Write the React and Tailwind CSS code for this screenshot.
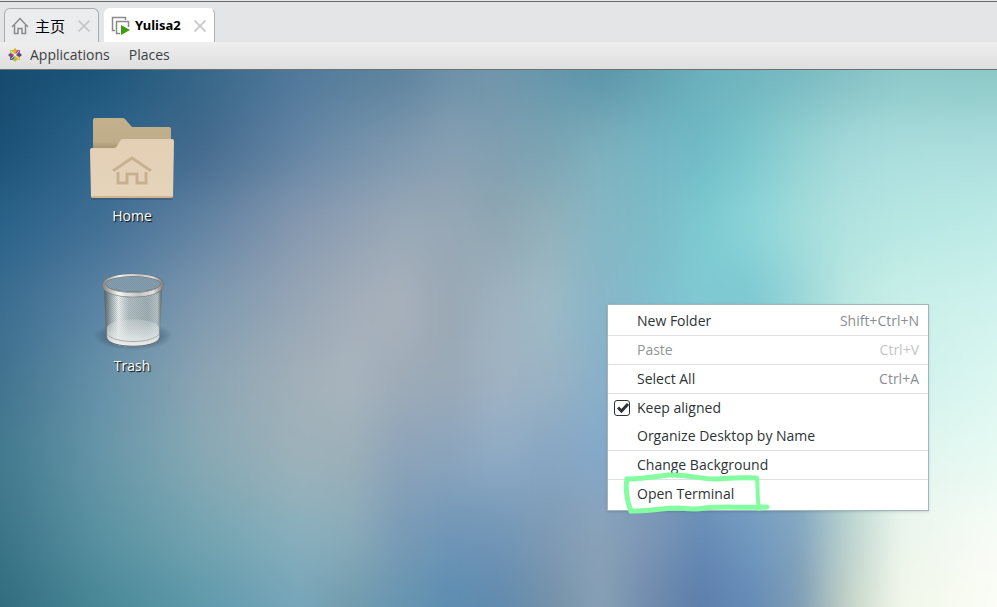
import { useState } from 'react';

const UI_FONT = "font-['Open_Sans','Noto_Sans',sans-serif]";

// Wallpaper: one horizontal gradient per band, softened vertically
const STOPS = [0, 100, 200, 300, 350, 400, 450, 500, 550, 600, 650, 700, 750, 800, 850, 900, 997];
const BANDS = [
  ['#164b6e', '#1b5479', '#356688', '#50789a', '#567e9b', '#5d829d', '#6b90a8', '#7095ab', '#6496ab', '#5a94a8', '#62a0b0', '#6aafbb', '#70b4be', '#77b9c1', '#83bfc4', '#8cc7c8', '#8bc7c6'],
  ['#1b5075', '#2f658c', '#42698c', '#6485a5', '#7290aa', '#7d98af', '#879fb2', '#7f9fb1', '#7aa4b3', '#7eb0bd', '#76b6c4', '#6fbac5', '#7bc7cd', '#93d2d3', '#a5dadb', '#aadedd', '#acdede'],
  ['#2a6289', '#416f95', '#6283a3', '#8799b0', '#91a1b4', '#9aa9b7', '#97a8b6', '#8fa7b2', '#92b1bb', '#86b7c4', '#7cbbc7', '#7dcad1', '#8bd5d9', '#a3dddb', '#b1e3e0', '#b6e7e3', '#bdebe6'],
  ['#3a6d90', '#5b83a4', '#7d98af', '#97a6b6', '#a2adb9', '#a8b2bb', '#9aa8b5', '#9fb2bf', '#9dbbc6', '#88b5c8', '#80bfcd', '#7fc9d3', '#7cc8d1', '#98d6d9', '#bce8e2', '#c9efe8', '#cff2ee'],
  ['#41738f', '#6591a9', '#8ba4b3', '#a2b0b9', '#a9b5be', '#9facb8', '#9aa9b7', '#a1b3c3', '#9ab3c4', '#8ab0c9', '#86b1c9', '#80b8ca', '#8ac3cd', '#a3d6da', '#bfe7e5', '#cff0ee', '#dbf7f0'],
  ['#427a8f', '#6696a8', '#87a9b4', '#9eb2ba', '#9cafb9', '#8da4b9', '#8ca5bd', '#90acc6', '#87a6c2', '#84a9ca', '#839fc0', '#7da2c6', '#80a7c6', '#8db5c9', '#b7dad8', '#e0f5ee', '#e6faf3'],
  ['#3c7488', '#5a92a2', '#74a4b1', '#89b0bd', '#8bacba', '#7a9bb6', '#7096b7', '#7296b6', '#7f9bb5', '#8aa2b8', '#7c97b6', '#668bb5', '#719ac0', '#83a5c0', '#bdd4cf', '#ebf5ec', '#f8fcf6'],
  ['#2f6b7e', '#478795', '#5c98aa', '#76a5ba', '#709bad', '#6595b0', '#5a8cb0', '#6089ae', '#7390a8', '#86a0b5', '#6f8aab', '#5c7dab', '#6389b5', '#7f9db3', '#c8d5c8', '#f2f7ea', '#fbfdf6'],
];

function Wallpaper() {
  return (
    <svg
      className="absolute inset-0 h-full w-full"
      viewBox="0 0 997 537"
      preserveAspectRatio="none"
      aria-hidden="true"
    >
      <defs>
        {BANDS.map((colors, row) => (
          <linearGradient key={row} id={`band-${row}`} gradientUnits="userSpaceOnUse" x1="0" x2="997" y1="0" y2="0">
            {colors.map((color, i) => (
              <stop key={i} offset={STOPS[i] / 997} stopColor={color} />
            ))}
          </linearGradient>
        ))}
        <filter id="soften" x="-10%" y="-40%" width="120%" height="180%" colorInterpolationFilters="sRGB">
          <feGaussianBlur stdDeviation="8 29" />
        </filter>
      </defs>
      <g filter="url(#soften)">
        {BANDS.map((_, row) => (
          <rect
            key={row}
            x="-60"
            width="1117"
            y={row === 0 ? -150 : row * 77 - 38}
            height={row === 0 ? 189 : row === BANDS.length - 1 ? 240 : 78}
            fill={`url(#band-${row})`}
          />
        ))}
      </g>
    </svg>
  );
}

function HouseIcon() {
  return (
    <svg width="18" height="18" viewBox="0 0 18 18" fill="none" stroke="#8a8a8a" strokeWidth="1.5" aria-hidden="true">
      <path d="M1 10 9 1.500l8 8.500" />
      <path d="M3.500 8v8.500h3.500v-5h4v5h3.500V8" />
    </svg>
  );
}

function MachineIcon() {
  return (
    <svg width="20" height="20" viewBox="0 0 20 20" fill="none" aria-hidden="true">
      <path d="M4 14.500H1.500v-13h13V4" stroke="#8a8a8a" strokeWidth="1.500" />
      <path d="M9 17.500H5.500v-12h12V11" stroke="#8a8a8a" strokeWidth="1.500" />
      <path d="M10 9v10l9-5z" fill="#3f9c12" />
    </svg>
  );
}

function CloseIcon() {
  return (
    <svg width="12" height="12" viewBox="0 0 12 12" stroke="#c6c6c6" strokeWidth="1.600" aria-hidden="true">
      <path d="M0.500 0.500l11 11M11.500 0.500l-11 11" />
    </svg>
  );
}

function PinwheelIcon() {
  return (
    <svg width="14" height="14" viewBox="0 0 14 14" aria-hidden="true">
      <path d="M2 2h4.500v4.500H2z" fill="#b4d55c" />
      <path d="M7.500 2H12v4.500H7.500z" fill="#a8569a" />
      <path d="M2 7.500h4.500V12H2z" fill="#5b5a9c" />
      <path d="M7.500 7.500H12V12H7.500z" fill="#f0b54a" />
      <path d="M7 0l2 2.200L7 6 5 2.200z" fill="#efa724" />
      <path d="M14 7l-2.200 2L8 7l3.800-2z" fill="#4a4990" />
      <path d="M7 14l-2-2.200L7 8l2 3.800z" fill="#9ccd2a" />
      <path d="M0 7l2.200-2L6 7 2.200 9z" fill="#a0388a" />
      <path d="M3 3l8 8M11 3l-8 8" stroke="#f4f0ea" strokeWidth="0.700" />
    </svg>
  );
}

function FolderIcon() {
  return (
    <svg width="84" height="84" viewBox="0 0 84 84" aria-hidden="true">
      <defs>
        <linearGradient id="folder-back" x1="0" y1="0" x2="0" y2="1">
          <stop offset="0" stopColor="#c3b18e" />
          <stop offset="0.750" stopColor="#bfac88" />
          <stop offset="1" stopColor="#a08d6d" />
        </linearGradient>
        <linearGradient id="folder-front" x1="0" y1="0" x2="0" y2="1">
          <stop offset="0" stopColor="#e3cfb4" />
          <stop offset="1" stopColor="#e5d4bb" />
        </linearGradient>
      </defs>
      <path d="M3 32V2q0-2 2-2h27q2 0 3 1l6 7q1 1 2 1h36q2 0 2 2v21z" fill="url(#folder-back)" />
      <path d="M1 78v2q0 2 2 2h78q2 0 2-2v-2z" fill="#34536e" opacity="0.500" />
      <path d="M0 32q0-2 2-2h22q2 0 3-2l3-5q1-2 3-2h49q2 0 2 2l-1 55q0 2-2 2H3q-2 0-2-2z" fill="url(#folder-front)" />
      <path d="M1 78q0 2 2 2h78q2 0 2-2z" fill="#d3b28e" />
      <path d="M23 54l19-14 19 14M28 55v10h9v-9h10v9h9V55" fill="none" stroke="#f0e2cf" strokeWidth="2.500" />
      <path d="M23 53l19-13 19 13M28 54v11h9v-9h10v9h9V54" fill="none" stroke="#c6b090" strokeWidth="3" />
    </svg>
  );
}

function TrashIcon() {
  return (
    <svg width="84" height="84" viewBox="0 0 84 84" aria-hidden="true">
      <defs>
        <linearGradient id="bin-body">
          <stop offset="0" stopColor="#4e5f66" />
          <stop offset="0.100" stopColor="#93a1a4" />
          <stop offset="0.250" stopColor="#eef2f2" />
          <stop offset="0.420" stopColor="#b6c1c5" />
          <stop offset="0.750" stopColor="#a3b1b6" />
          <stop offset="0.920" stopColor="#bcc6c7" />
          <stop offset="1" stopColor="#556469" />
        </linearGradient>
        <linearGradient id="bin-floor" x1="0" y1="0" x2="0" y2="1">
          <stop offset="0" stopColor="#dde2e1" stopOpacity="0.300" />
          <stop offset="1" stopColor="#eceeed" />
        </linearGradient>
        <linearGradient id="bin-rim">
          <stop offset="0" stopColor="#8b8d8c" />
          <stop offset="0.250" stopColor="#f4f4f3" />
          <stop offset="0.600" stopColor="#c3c5c4" />
          <stop offset="0.850" stopColor="#e0e0df" />
          <stop offset="1" stopColor="#838585" />
        </linearGradient>
        <pattern id="bin-mesh" width="2" height="2" patternUnits="userSpaceOnUse">
          <path d="M0 0h1v1H0zM1 1h1v1H1z" fill="#4f6470" opacity="0.200" />
        </pattern>
        <radialGradient id="bin-shadow">
          <stop offset="0.500" stopColor="#22384a" stopOpacity="0.500" />
          <stop offset="1" stopColor="#22384a" stopOpacity="0" />
        </radialGradient>
      </defs>
      <ellipse cx="43" cy="68" rx="40" ry="14" fill="url(#bin-shadow)" />
      <path d="M14 17l2 52c2 13 52 13 54 0l2-52z" fill="url(#bin-body)" />
      <path d="M14 17l2 52c2 13 52 13 54 0l2-52z" fill="url(#bin-mesh)" />
      <path d="M17 59c4-10 48-10 52 0v10c-2 12-50 12-52 0z" fill="url(#bin-floor)" />
      <path d="M17 66c6 10 46 10 52 0" fill="none" stroke="#a5aba9" strokeWidth="1" />
      <path d="M16 70c4 11 50 11 54 0" fill="none" stroke="#626b6c" strokeWidth="1" />
      <ellipse cx="43" cy="16" rx="29" ry="10" fill="#84a0b0" />
      <ellipse cx="43" cy="16" rx="29" ry="10" fill="url(#bin-mesh)" />
      <ellipse cx="43" cy="16" rx="29" ry="9" fill="none" stroke="#6e7270" strokeWidth="3" />
      <ellipse cx="43" cy="16" rx="29" ry="9" fill="none" stroke="url(#bin-rim)" strokeWidth="2" />
      <path d="M14 17c2 13 56 13 58 0" fill="none" stroke="#707673" strokeWidth="5" />
      <path d="M14 17c2 13 56 13 58 0" fill="none" stroke="url(#bin-rim)" strokeWidth="4" />
    </svg>
  );
}

function Tab({ icon, label, active = false }) {
  return (
    <div
      className={`flex h-[34px] items-center rounded-t-md border border-b-0 px-2 pl-1.5 ${
        active ? 'border-white border-r-[#b0b0b2] bg-white' : 'border-[#a9abae] bg-[#ebecee]'
      }`}
    >
      <button
        type="button"
        className={`flex items-center text-black ${
          active
            ? "gap-1 font-['Noto_Sans',sans-serif] text-[13px] font-bold"
            : "gap-1.5 font-['Noto_Sans_CJK_SC',sans-serif] text-[15px] leading-5"
        }`}
      >
        {icon}
        {label}
      </button>
      <button type="button" aria-label={`Close ${label}`} className="ml-[13px]">
        <CloseIcon />
      </button>
    </div>
  );
}

function DesktopItem({ icon, label }) {
  return (
    <button
      type="button"
      className="flex w-[84px] flex-col items-center gap-1 text-[14px] leading-5 text-white [text-shadow:1px_1px_1px_#000]"
    >
      {icon}
      {label}
    </button>
  );
}

function MenuItem({ label, shortcut, disabled = false, children }) {
  return (
    <button
      type="button"
      role="menuitem"
      disabled={disabled}
      className={`relative flex h-7 w-full items-center pr-[9px] pl-[29px] text-left ${
        disabled ? 'text-[#919494]' : 'text-[#2e3436]'
      }`}
    >
      {label}
      {shortcut && (
        <span className={`ml-auto ${disabled ? 'text-[#c3c5c5]' : 'text-[#8b8e8f]'}`}>{shortcut}</span>
      )}
      {children}
    </button>
  );
}

function Separator() {
  return <div role="separator" className="h-px bg-[#dfe0e0]" />;
}

// Hand-drawn marker around the terminal entry
function Marker() {
  return (
    <svg
      className="pointer-events-none absolute -top-3 left-2.5 z-10"
      width="152"
      height="48"
      viewBox="0 0 152 48"
      fill="none"
      stroke="#83fd9f"
      strokeLinecap="round"
      strokeLinejoin="round"
      aria-hidden="true"
    >
      <path d="M9 11C22 11 36 9 50 7c20-1 34 5 50 4 12-1 22-2 38-1" strokeWidth="5" />
      <path d="M9 11C7 20 9 34 13 43" strokeWidth="5" />
      <path d="M139 10c1 10 0 20 2 31" strokeWidth="4" />
      <path d="M13 43c18 0 33-3 48-3 10 1 16 2 26 0 18-2 36 0 62-1" strokeWidth="5" />
    </svg>
  );
}

function ContextMenu() {
  const [aligned, setAligned] = useState(true);

  return (
    <div
      role="menu"
      className="absolute top-[234px] left-[607px] w-[322px] border border-[#a1b6bc] bg-white py-0.5 text-[14px] leading-5 shadow-sm"
    >
      <MenuItem label="New Folder" shortcut="Shift+Ctrl+N" />
      <Separator />
      <MenuItem label="Paste" shortcut="Ctrl+V" disabled />
      <Separator />
      <MenuItem label="Select All" shortcut="Ctrl+A" />
      <Separator />
      <label className="flex h-7 items-center gap-[7px] pl-1.5 text-[#2e3436]">
        <span className="grid size-4">
          <input
            type="checkbox"
            checked={aligned}
            onChange={(e) => setAligned(e.target.checked)}
            className="col-start-1 row-start-1 size-4 appearance-none rounded-[3px] border border-[#2e3436] bg-white"
          />
          {aligned && (
            <svg className="pointer-events-none col-start-1 row-start-1" viewBox="0 0 16 16" aria-hidden="true">
              <path d="M4 7.500l3.500 3.500L14 4" fill="none" stroke="#2e3436" strokeWidth="3" />
            </svg>
          )}
        </span>
        Keep aligned
      </label>
      <MenuItem label="Organize Desktop by Name" />
      <Separator />
      <MenuItem label="Change Background" />
      <Separator />
      <MenuItem label="Open Terminal">
        <Marker />
      </MenuItem>
    </div>
  );
}

export default function App() {
  return (
    <div className={`flex min-h-screen flex-col overflow-hidden ${UI_FONT}`}>
      <header className="border-t border-[#e4e5e7] bg-[#e4e5e7]">
        <div className="flex items-end gap-[5px] border-t border-[#68696b] px-1 pt-1.5">
          <Tab icon={<HouseIcon />} label="主页" />
          <Tab icon={<MachineIcon />} label="Yulisa2" active />
        </div>
      </header>

      <nav className="flex h-7 items-center border-b border-[#6b6f70] bg-linear-to-b from-[#efefef] to-[#dfdfdf] pb-0.5 pl-2 text-[14px] text-[#3c4144]">
        <button type="button" className="flex items-center gap-2">
          <PinwheelIcon />
          Applications
        </button>
        <button type="button" className="ml-[19px]">
          Places
        </button>
      </nav>

      <main className="relative flex-1 overflow-hidden">
        <Wallpaper />
        <div className="relative flex flex-col gap-[42px] pt-12 pl-[90px]">
          <DesktopItem icon={<FolderIcon />} label="Home" />
          <DesktopItem icon={<TrashIcon />} label="Trash" />
        </div>
        <ContextMenu />
      </main>
    </div>
  );
}
